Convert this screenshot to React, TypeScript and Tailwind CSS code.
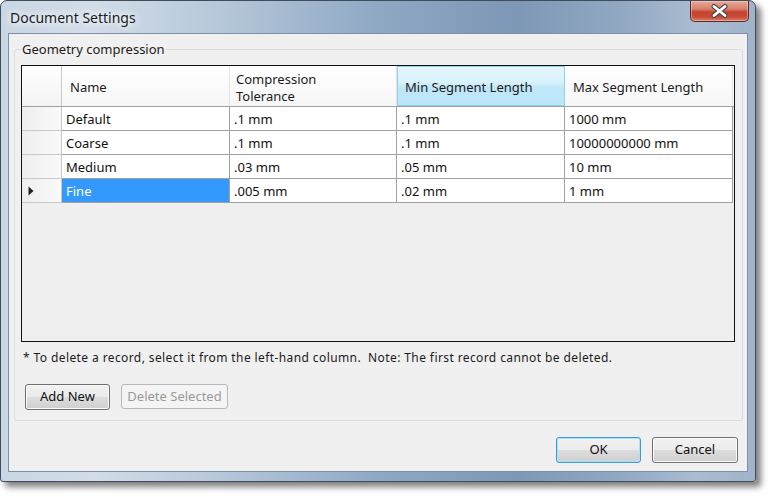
import React from "react";

const rows = [
  ["Default", ".1 mm", ".1 mm", "1000 mm"],
  ["Coarse", ".1 mm", ".1 mm", "10000000000 mm"],
  ["Medium", ".03 mm", ".05 mm", "10 mm"],
  ["Fine", ".005 mm", ".02 mm", "1 mm"],
];

const colW = ["w-[168px]", "w-[167px]", "w-[168px]", "w-[168px]"];

function Btn({
  children,
  w,
  disabled,
  focused,
}: {
  children: React.ReactNode;
  w: string;
  disabled?: boolean;
  focused?: boolean;
}) {
  if (disabled) {
    return (
      <div
        className={`${w} h-[25px] rounded-[3px] border border-[#b5b9bd] bg-[#f4f4f4] text-[#9a9a9a] text-[13px] flex items-center justify-center`}
      >
        {children}
      </div>
    );
  }
  return (
    <div
      className={`${w} h-[26px] rounded-[3px] border ${
        focused
          ? "border-[#3c9bd6] shadow-[inset_0_0_0_1px_#a8e4f8]"
          : "border-[#707070] shadow-[inset_0_0_0_1px_#fbfbfb]"
      } bg-[linear-gradient(180deg,#f2f2f2_0%,#ebebeb_48%,#dddddd_52%,#cfcfcf_100%)] text-[#111] text-[13px] flex items-center justify-center`}
    >
      {children}
    </div>
  );
}

export default function App() {
  return (
    <div className="w-[771px] h-[497px] bg-white font-['Noto_Sans',sans-serif]">
      <div className="w-[756px] h-[482px] rounded-t-[7px] rounded-b-[3px] border border-[#404c5a] shadow-[5px_5px_6px_rgba(0,0,0,0.5)] bg-[linear-gradient(90deg,#c9d6e4_0%,#d2dde9_12%,#b4c6d9_30%,#8fa8c4_50%,#7d97b6_68%,#91a8c2_82%,#a9bcd1_92%,#9fb3ca_100%)] flex flex-col overflow-hidden">
        {/* Title bar */}
        <div className="h-[32px] flex items-start shrink-0">
          <div className="pl-[9px] pt-[7px] text-[14px] leading-[20px] text-[#1b1b1b] [text-shadow:0_0_6px_#ffffff,0_0_10px_#ffffff]">
            Document Settings
          </div>
          <div className="ml-auto mr-[6px] w-[59px] h-[21px] rounded-b-[5px] border border-t-0 border-[#5a2a24] bg-[linear-gradient(180deg,#e9a99a_0%,#d9806c_40%,#c4432f_55%,#c84c36_80%,#d8826f_100%)] shadow-[inset_0_0_0_1px_rgba(255,220,210,0.45)] flex items-center justify-center">
            <svg width="17" height="14" viewBox="0 0 17 14">
              <path
                d="M3 2.5 L14 11.5 M14 2.5 L3 11.5"
                stroke="#4a4a4a"
                strokeWidth="5"
                strokeLinecap="round"
                fill="none"
              />
              <path
                d="M3 2.5 L14 11.5 M14 2.5 L3 11.5"
                stroke="#ffffff"
                strokeWidth="2.8"
                strokeLinecap="round"
                fill="none"
              />
            </svg>
          </div>
        </div>

        {/* Client area */}
        <div className="mx-[7px] h-[439px] shrink-0 border border-[#7d90a6] bg-[#f0f0f0] flex flex-col">
          {/* Group box */}
          <div className="relative mt-[15px] ml-[5px] mr-[4px] h-[372px] border border-[#d5dde3] rounded-[3px] flex flex-col">
            <div className="absolute left-[6px] top-[-10px] px-[1px] bg-[#f0f0f0] text-[13px] leading-[18px] text-[#1b1b1b]">
              Geometry compression
            </div>

            {/* Grid */}
            <div className="ml-[6px] mt-[15px] w-[714px] h-[277px] border border-[#111] bg-[#efefef] flex flex-col">
              {/* Header */}
              <div className="h-[41px] flex bg-white border-b border-[#a0a0a0] text-[13px] text-[#1b1b1b] shrink-0">
                <div className="w-[40px] border-r border-[#c8c8c8] bg-[linear-gradient(180deg,#ffffff_0%,#f3f3f3_100%)]" />
                <div className="w-[168px] border-r border-[#e3e3e3] bg-[linear-gradient(180deg,#ffffff_0%,#f6f6f6_100%)] pl-[8px] pt-[4px] flex items-center">
                  Name
                </div>
                <div className="w-[167px] border-r border-[#e3e3e3] bg-[linear-gradient(180deg,#ffffff_0%,#f6f6f6_100%)] pl-[6px] pt-[3px] flex items-center leading-[17px]">
                  Compression
                  <br />
                  Tolerance
                </div>
                <div className="w-[168px] border border-[#8fd0ec] bg-[linear-gradient(180deg,#e4f6fd_0%,#d9f2fc_40%,#bfe7f9_55%,#bce6f8_100%)] pl-[7px] pt-[3px] flex items-center">
                  Min Segment Length
                </div>
                <div className="w-[168px] border-r border-[#e3e3e3] bg-[linear-gradient(180deg,#ffffff_0%,#f6f6f6_100%)] pl-[8px] pt-[4px] flex items-center">
                  Max Segment Length
                </div>
              </div>

              {/* Rows */}
              {rows.map((r, i) => (
                <div key={i} className="h-[24px] flex shrink-0 text-[13px] text-[#111]">
                  <div className="w-[40px] border-r border-b border-[#c8c8c8] bg-[linear-gradient(90deg,#eeeeee_0%,#f1f1f1_30%,#fafafa_100%)] flex items-center pl-[6px]">
                    {i === 3 && (
                      <svg width="6" height="10" viewBox="0 0 6 10">
                        <path d="M0.5 0.5 L5.5 5 L0.5 9.5 Z" fill="#222" />
                      </svg>
                    )}
                  </div>
                  {r.map((c, j) => (
                    <div
                      key={j}
                      className={`${colW[j]} border-r border-b border-[#a0a0a0] pl-[4px] pt-[2px] flex items-center ${
                        i === 3 && j === 0 ? "bg-[#3399ff] text-white" : "bg-white"
                      }`}
                    >
                      {c}
                    </div>
                  ))}
                </div>
              ))}
            </div>

            {/* Note */}
            <div className="mt-[8px] ml-[8px] text-[12px] leading-[16px] text-[#1b1b1b] tracking-[0.4px] whitespace-pre">
              {"* To delete a record, select it from the left-hand column.  Note: The first record cannot be deleted."}
            </div>

            {/* Buttons */}
            <div className="mt-[18px] ml-[10px] flex gap-[11px]">
              <Btn w="w-[85px]">Add New</Btn>
              <Btn w="w-[107px]" disabled>
                Delete Selected
              </Btn>
            </div>
          </div>

          {/* OK / Cancel */}
          <div className="mt-[16px] mr-[9px] flex justify-end gap-[11px]">
            <Btn w="w-[85px]" focused>
              OK
            </Btn>
            <Btn w="w-[86px]">Cancel</Btn>
          </div>
        </div>
      </div>
    </div>
  );
}
